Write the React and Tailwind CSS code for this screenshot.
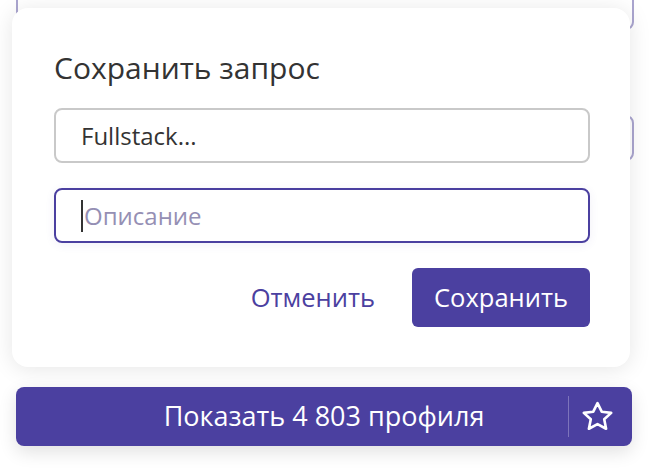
import React from "react";

function StarIcon() {
  return (
    <svg width="35" height="35" viewBox="0 0 24 24" fill="none" stroke="white" strokeWidth="1.8" strokeLinejoin="round">
      <polygon points="12,2.8 14.9,8.7 21.4,9.5 16.6,13.9 17.9,20.4 12,17.2 6.1,20.4 7.4,13.9 2.6,9.5 9.1,8.7" />
    </svg>
  );
}

export default function App() {
  return (
    <div
      className="relative w-[650px] h-[470px] overflow-hidden bg-white"
      style={{ fontFamily: "'Open Sans', Roboto, sans-serif" }}
    >
      {/* Form behind the popup */}
      <div className="flex flex-col gap-[20px] px-4 -mt-[30px]">
        <div className="h-[60px] rounded-lg border-2 border-[#aaa5cf] bg-white" />
        <div className="h-[45px]" />
        <div className="h-[46px] rounded-lg border-2 border-[#aaa5cf] bg-white" />
        <div className="h-[141px]" />
        <div className="h-[20px] w-[120px] rounded-lg bg-[#4b40a0]" />
      </div>

      {/* Show profiles button */}
      <div className="absolute left-4 top-[387px] w-[616px]">
        <button className="relative flex h-[59px] w-full items-center justify-center rounded-lg bg-[#4b40a0] text-[27px] text-white shadow-[0_6px_18px_rgba(0,0,0,0.12)]">
          Показать 4 803 профиля
          <span className="absolute right-[63px] top-[9px] h-[41px] w-px bg-[#7d74bb]" />
          <span className="absolute right-[17px] top-[12px] flex">
            <StarIcon />
          </span>
        </button>
      </div>

      {/* Save request popup */}
      <div className="absolute left-[12px] top-[8px] flex w-[618px] flex-col rounded-2xl bg-white pl-[42px] pr-[40px] pt-[44px] pb-[40px] shadow-[0_2px_22px_rgba(0,0,0,0.10)]">
        <h2 className="h-[32px] text-[30px] leading-[32px] text-[#333]">Сохранить запрос</h2>

        <div className="mt-[24px] flex h-[55px] items-center rounded-lg border-2 border-[#c9c9c9] pl-[25px] text-[24px] text-[#333]">
          Fullstack...
        </div>

        <div className="mt-[25px] flex h-[55px] items-center rounded-lg border-2 border-[#4b40a0] pl-[25px] text-[24px] text-[#958fb4] shadow-[0_2px_10px_rgba(75,64,160,0.08)]">
          <span className="mr-px h-[32px] w-[2px] bg-[#333]" />
          Описание
        </div>

        <div className="mt-[25px] flex items-center justify-end gap-[37px]">
          <button className="text-[25.5px] text-[#4b40a0]">Отменить</button>
          <button className="h-[59px] w-[178px] rounded-md bg-[#4b40a0] text-[25.5px] text-white">
            Сохранить
          </button>
        </div>
      </div>
    </div>
  );
}
